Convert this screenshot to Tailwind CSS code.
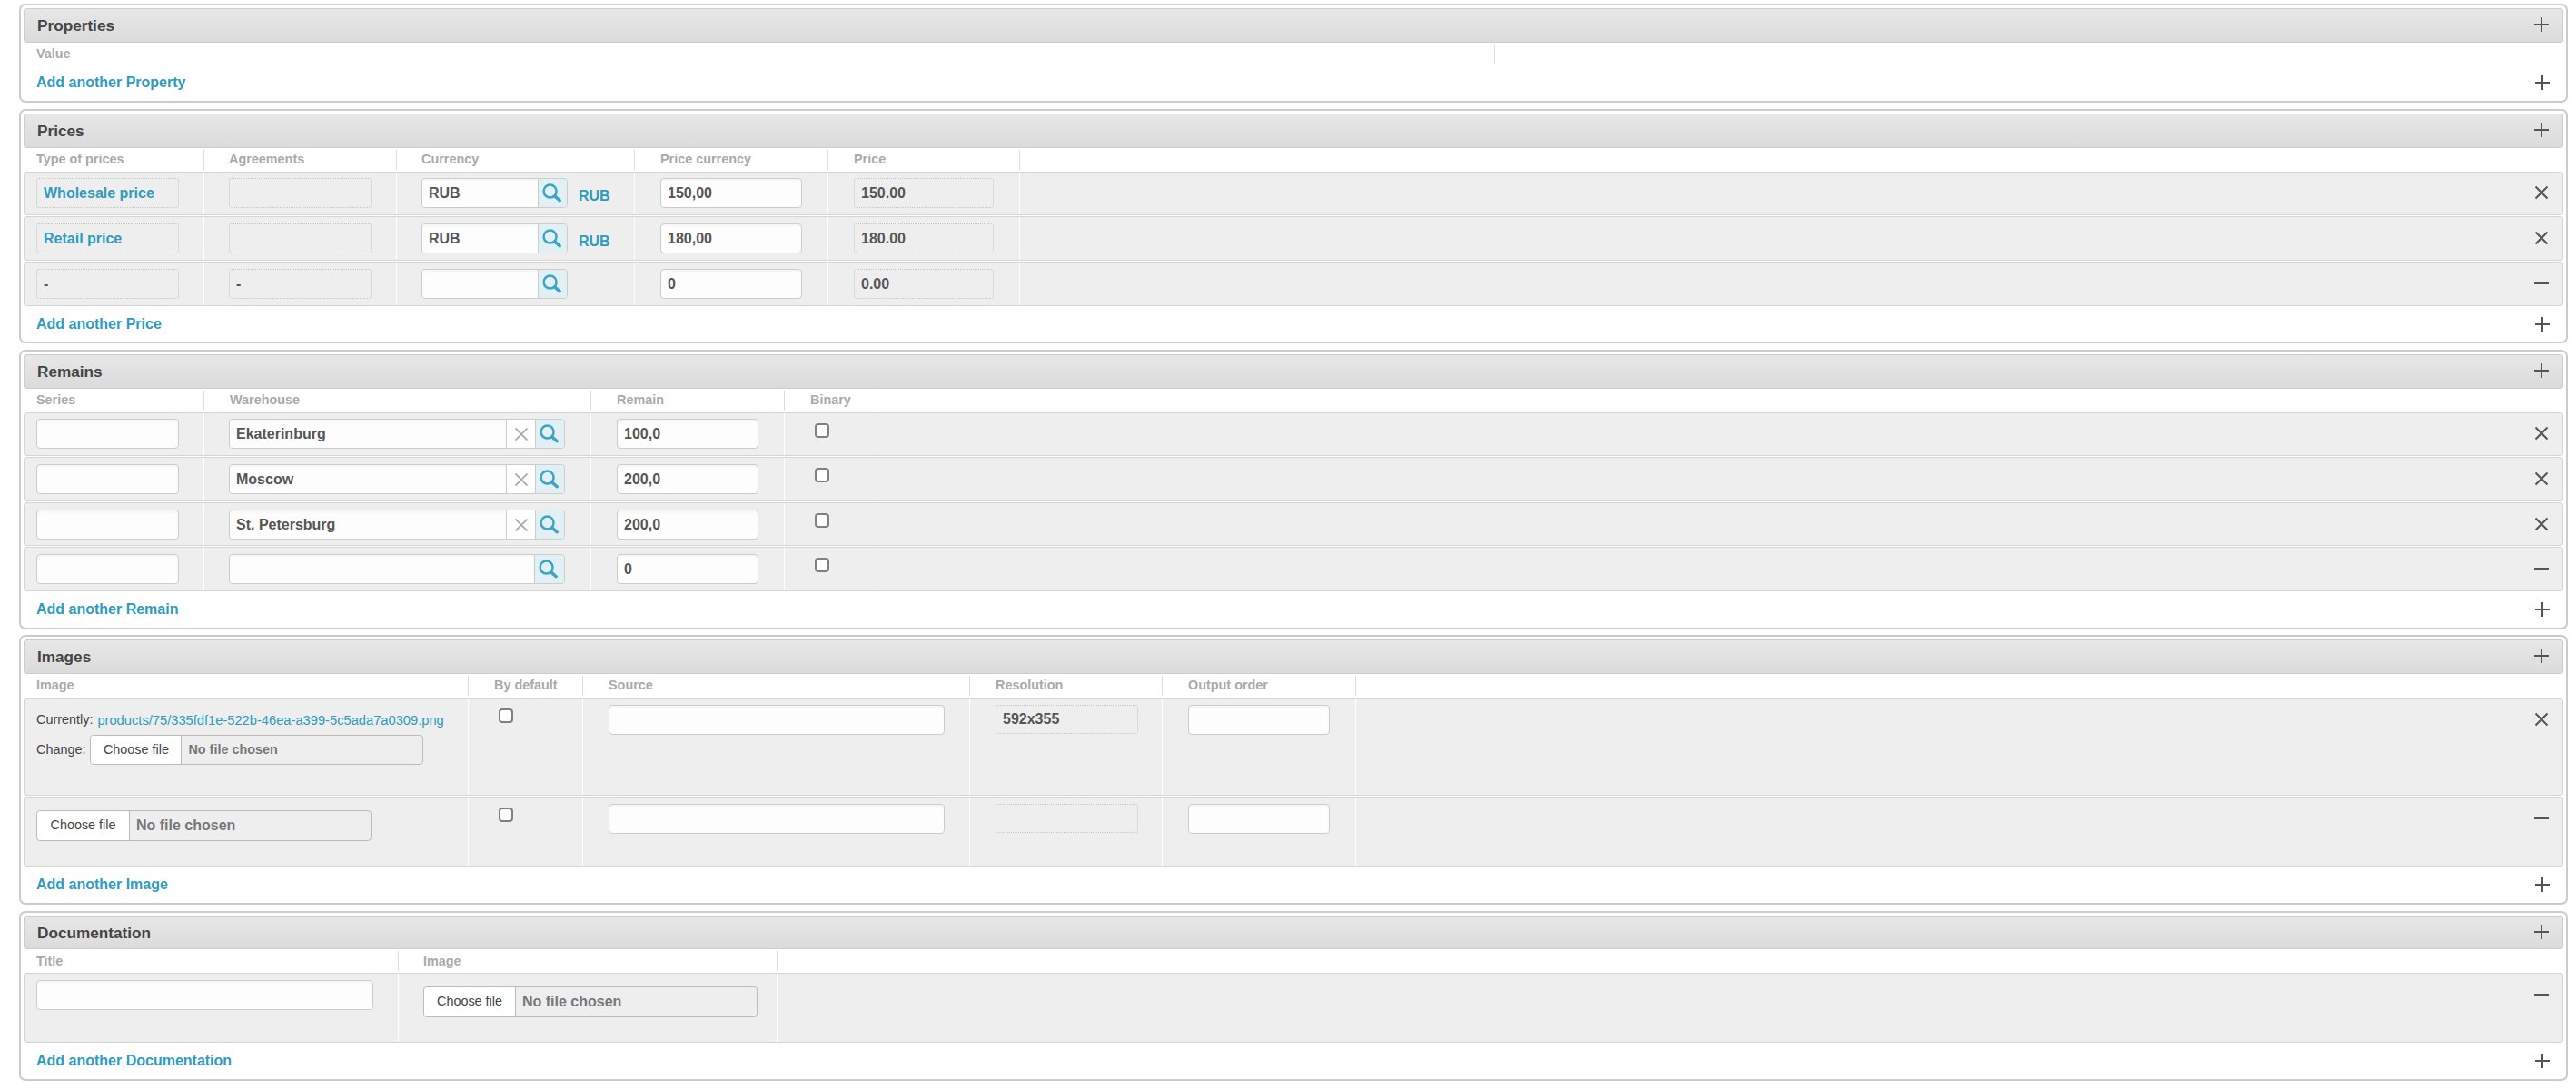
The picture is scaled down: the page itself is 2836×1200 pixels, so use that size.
<!DOCTYPE html>
<html lang="en">
<head>
  <meta charset="UTF-8" />
  <title>Product inlines</title>
  <script src="https://cdn.jsdelivr.net/npm/@tailwindcss/browser@4"></script>
</head>
<body class="bg-white font-['Liberation_Sans',Arial,sans-serif] pt-[4px] pl-[21px] pr-[9px]">

  <svg class="hidden">
    <symbol id="plus" viewBox="0 0 16 16"><path d="M0 8H16M8 0V16" stroke="#555" stroke-width="2" fill="none" /></symbol>
    <symbol id="minus" viewBox="0 0 16 16"><path d="M0 8H16" stroke="#555" stroke-width="2" fill="none" /></symbol>
    <symbol id="cross" viewBox="0 0 16 16"><path d="M1.5 1.5L14.5 14.5M14.5 1.5L1.5 14.5" stroke="#555" stroke-width="2" fill="none" /></symbol>
    <symbol id="clear" viewBox="0 0 14 14"><path d="M0.5 0.5L13.5 13.5M13.5 0.5L0.5 13.5" stroke="#aaa" stroke-width="1.8" fill="none" /></symbol>
    <symbol id="search" viewBox="0 0 32 32"><circle cx="13" cy="14" r="7.2" stroke="#3fa3c4" stroke-width="2.6" fill="none" /><path d="M18.5 19.8L24 24.5" stroke="#3fa3c4" stroke-width="3.6" stroke-linecap="round" fill="none" /></symbol>
  </svg>

  <!-- Properties -->
  <section class="border-2 border-[#ccc] rounded-[7px] px-[3px] pt-[3px] h-[109px] mb-[7px]">
    <div class="h-[38px] flex items-center justify-between pl-[14px] pr-[15px] rounded-[3px] border border-[#ccc] bg-gradient-to-b from-[#e7e7e7] to-[#dbdbdb]">
      <h2 class="mt-[2px] text-[17.2px] font-bold text-[#444]">Properties</h2>
      <svg class="w-4 h-4 mb-[2px]"><use href="#plus" /></svg>
    </div>
    <div class="flex h-[26px] text-[14.4px] font-bold text-[#aaa]">
      <div class="w-[1620px] my-[2px] pl-[14px] flex items-center border-r border-[#ddd]">Value</div>
    </div>
    <div class="h-[36px] flex items-center justify-between pl-[14px] pr-[15px]">
      <a class="text-[16px] font-bold text-[#2f9bbf]">Add another Property</a>
      <svg class="w-4 h-4"><use href="#plus" /></svg>
    </div>
  </section>

  <!-- Prices -->
  <section class="border-2 border-[#ccc] rounded-[7px] px-[3px] pt-[3px] h-[258px] mb-[7px]">
    <div class="h-[38px] flex items-center justify-between pl-[14px] pr-[15px] rounded-[3px] border border-[#ccc] bg-gradient-to-b from-[#e7e7e7] to-[#dbdbdb]">
      <h2 class="mt-[2px] text-[17.2px] font-bold text-[#444]">Prices</h2>
      <svg class="w-4 h-4 mb-[2px]"><use href="#plus" /></svg>
    </div>
    <div class="flex h-[26px] text-[14.4px] font-bold text-[#aaa]">
      <div class="w-[199px] my-[2px] pl-[14px] flex items-center border-r border-[#ddd]">Type of prices</div>
      <div class="w-[212px] my-[2px] pl-[27px] flex items-center border-r border-[#ddd]">Agreements</div>
      <div class="w-[262px] my-[2px] pl-[27px] flex items-center border-r border-[#ddd]">Currency</div>
      <div class="w-[213px] my-[2px] pl-[28px] flex items-center border-r border-[#ddd]">Price currency</div>
      <div class="w-[211px] my-[2px] pl-[28px] flex items-center border-r border-[#ddd]">Price</div>
    </div>

    <div class="flex h-[48px] mb-px border border-[#d4d4d4] rounded-[3px] bg-[#eee] text-[16px] font-bold text-[#555]">
      <div class="w-[198px] pl-[13px] pt-[6px] border-r border-white">
        <div class="w-[157px] h-[33px] pl-[7px] flex items-center border border-dotted border-[#c4c4c4] rounded-[3px] text-[#2f9bbf]">Wholesale price</div>
      </div>
      <div class="w-[212px] pl-[27px] pt-[6px] border-r border-white">
        <div class="w-[157px] h-[33px] border border-dotted border-[#c4c4c4] rounded-[3px]"></div>
      </div>
      <div class="w-[262px] pl-[27px] pt-[6px] border-r border-white flex items-start">
        <div class="flex w-[161px] h-[33px] border border-[#ccc] rounded-[4px] overflow-hidden">
          <input value="RUB" class="flex-1 min-w-0 pl-[7px] bg-[#fdfdfd] font-bold shadow-[inset_0_2px_3px_rgba(0,0,0,0.03)]" />
          <span class="w-[32px] bg-[#e1f0f5] border-l border-[#ccc]"><svg class="w-[31px] h-[31px]"><use href="#search" /></svg></span>
        </div>
        <a class="ml-[12px] mt-[8px] text-[#2f9bbf]">RUB</a>
      </div>
      <div class="w-[213px] pl-[28px] pt-[6px] border-r border-white">
        <input value="150,00" class="w-[156px] h-[33px] pl-[7px] bg-[#fdfdfd] font-bold border border-[#ccc] rounded-[4px] shadow-[inset_0_2px_3px_rgba(0,0,0,0.03)]" />
      </div>
      <div class="w-[211px] pl-[28px] pt-[6px] border-r border-white">
        <div class="w-[154px] h-[33px] pl-[7px] flex items-center border border-dotted border-[#c4c4c4] rounded-[3px]">150.00</div>
      </div>
      <div class="flex-1 flex items-start justify-end pt-[14px] pr-[15px]"><svg class="w-4 h-4"><use href="#cross" /></svg></div>
    </div>

    <div class="flex h-[49px] mb-px border border-[#d4d4d4] rounded-[3px] bg-[#eee] text-[16px] font-bold text-[#555]">
      <div class="w-[198px] pl-[13px] pt-[7px] border-r border-white">
        <div class="w-[157px] h-[33px] pl-[7px] flex items-center border border-dotted border-[#c4c4c4] rounded-[3px] text-[#2f9bbf]">Retail price</div>
      </div>
      <div class="w-[212px] pl-[27px] pt-[7px] border-r border-white">
        <div class="w-[157px] h-[33px] border border-dotted border-[#c4c4c4] rounded-[3px]"></div>
      </div>
      <div class="w-[262px] pl-[27px] pt-[7px] border-r border-white flex items-start">
        <div class="flex w-[161px] h-[33px] border border-[#ccc] rounded-[4px] overflow-hidden">
          <input value="RUB" class="flex-1 min-w-0 pl-[7px] bg-[#fdfdfd] font-bold shadow-[inset_0_2px_3px_rgba(0,0,0,0.03)]" />
          <span class="w-[32px] bg-[#e1f0f5] border-l border-[#ccc]"><svg class="w-[31px] h-[31px]"><use href="#search" /></svg></span>
        </div>
        <a class="ml-[12px] mt-[8px] text-[#2f9bbf]">RUB</a>
      </div>
      <div class="w-[213px] pl-[28px] pt-[7px] border-r border-white">
        <input value="180,00" class="w-[156px] h-[33px] pl-[7px] bg-[#fdfdfd] font-bold border border-[#ccc] rounded-[4px] shadow-[inset_0_2px_3px_rgba(0,0,0,0.03)]" />
      </div>
      <div class="w-[211px] pl-[28px] pt-[7px] border-r border-white">
        <div class="w-[154px] h-[33px] pl-[7px] flex items-center border border-dotted border-[#c4c4c4] rounded-[3px]">180.00</div>
      </div>
      <div class="flex-1 flex items-start justify-end pt-[15px] pr-[15px]"><svg class="w-4 h-4"><use href="#cross" /></svg></div>
    </div>

    <div class="flex h-[49px] border border-[#d4d4d4] rounded-[3px] bg-[#eee] text-[16px] font-bold text-[#555]">
      <div class="w-[198px] pl-[13px] pt-[7px] border-r border-white">
        <div class="w-[157px] h-[33px] pl-[7px] flex items-center border border-dotted border-[#c4c4c4] rounded-[3px]">-</div>
      </div>
      <div class="w-[212px] pl-[27px] pt-[7px] border-r border-white">
        <div class="w-[157px] h-[33px] pl-[7px] flex items-center border border-dotted border-[#c4c4c4] rounded-[3px]">-</div>
      </div>
      <div class="w-[262px] pl-[27px] pt-[7px] border-r border-white flex items-start">
        <div class="flex w-[161px] h-[33px] border border-[#ccc] rounded-[4px] overflow-hidden">
          <input value="" class="flex-1 min-w-0 pl-[7px] bg-[#fdfdfd] font-bold shadow-[inset_0_2px_3px_rgba(0,0,0,0.03)]" />
          <span class="w-[32px] bg-[#e1f0f5] border-l border-[#ccc]"><svg class="w-[31px] h-[31px]"><use href="#search" /></svg></span>
        </div>
      </div>
      <div class="w-[213px] pl-[28px] pt-[7px] border-r border-white">
        <input value="0" class="w-[156px] h-[33px] pl-[7px] bg-[#fdfdfd] font-bold border border-[#ccc] rounded-[4px] shadow-[inset_0_2px_3px_rgba(0,0,0,0.03)]" />
      </div>
      <div class="w-[211px] pl-[28px] pt-[7px] border-r border-white">
        <div class="w-[154px] h-[33px] pl-[7px] flex items-center border border-dotted border-[#c4c4c4] rounded-[3px]">0.00</div>
      </div>
      <div class="flex-1 flex items-start justify-end pt-[15px] pr-[15px]"><svg class="w-4 h-4"><use href="#minus" /></svg></div>
    </div>

    <div class="h-[40px] flex items-center justify-between pl-[14px] pr-[15px]">
      <a class="text-[16px] font-bold text-[#2f9bbf]">Add another Price</a>
      <svg class="w-4 h-4"><use href="#plus" /></svg>
    </div>
  </section>

  <!-- Remains -->
  <section class="border-2 border-[#ccc] rounded-[7px] px-[3px] pt-[3px] h-[308px] mb-[6px]">
    <div class="h-[38px] flex items-center justify-between pl-[14px] pr-[15px] rounded-[3px] border border-[#ccc] bg-gradient-to-b from-[#e7e7e7] to-[#dbdbdb]">
      <h2 class="mt-[2px] text-[17.2px] font-bold text-[#444]">Remains</h2>
      <svg class="w-4 h-4 mb-[2px]"><use href="#plus" /></svg>
    </div>
    <div class="flex h-[26px] text-[14.4px] font-bold text-[#aaa]">
      <div class="w-[199px] my-[2px] pl-[14px] flex items-center border-r border-[#ddd]">Series</div>
      <div class="w-[426px] my-[2px] pl-[28px] flex items-center border-r border-[#ddd]">Warehouse</div>
      <div class="w-[213px] my-[2px] pl-[28px] flex items-center border-r border-[#ddd]">Remain</div>
      <div class="w-[102px] my-[2px] pl-[28px] flex items-center border-r border-[#ddd]">Binary</div>
    </div>

    <div class="flex h-[48px] mb-px border border-[#d4d4d4] rounded-[3px] bg-[#eee] text-[16px] font-bold text-[#555]">
      <div class="w-[198px] pl-[13px] pt-[6px] border-r border-white">
        <input class="w-[157px] h-[33px] bg-[#fdfdfd] border border-[#ccc] rounded-[4px] shadow-[inset_0_2px_3px_rgba(0,0,0,0.03)]" />
      </div>
      <div class="w-[426px] pl-[27px] pt-[6px] border-r border-white">
        <div class="flex w-[370px] h-[33px] border border-[#ccc] rounded-[4px] overflow-hidden">
          <input value="Ekaterinburg" class="flex-1 min-w-0 pl-[7px] bg-[#fdfdfd] font-bold shadow-[inset_0_2px_3px_rgba(0,0,0,0.03)]" />
          <span class="w-[33px] flex items-center justify-center bg-white border-l border-r border-[#ccc]"><svg class="w-[14px] h-[14px]"><use href="#clear" /></svg></span>
          <span class="w-[31px] bg-[#e1f0f5]"><svg class="w-[31px] h-[31px]"><use href="#search" /></svg></span>
        </div>
      </div>
      <div class="w-[213px] pl-[28px] pt-[6px] border-r border-white">
        <input value="100,0" class="w-[156px] h-[33px] pl-[7px] bg-[#fdfdfd] font-bold border border-[#ccc] rounded-[4px] shadow-[inset_0_2px_3px_rgba(0,0,0,0.03)]" />
      </div>
      <div class="w-[102px] pl-[33px] pt-[11px] border-r border-white">
        <span class="block w-4 h-4 border-2 border-[#808080] bg-white rounded-[4px]"></span>
      </div>
      <div class="flex-1 flex items-start justify-end pt-[14px] pr-[15px]"><svg class="w-4 h-4"><use href="#cross" /></svg></div>
    </div>

    <div class="flex h-[49px] mb-px border border-[#d4d4d4] rounded-[3px] bg-[#eee] text-[16px] font-bold text-[#555]">
      <div class="w-[198px] pl-[13px] pt-[7px] border-r border-white">
        <input class="w-[157px] h-[33px] bg-[#fdfdfd] border border-[#ccc] rounded-[4px] shadow-[inset_0_2px_3px_rgba(0,0,0,0.03)]" />
      </div>
      <div class="w-[426px] pl-[27px] pt-[7px] border-r border-white">
        <div class="flex w-[370px] h-[33px] border border-[#ccc] rounded-[4px] overflow-hidden">
          <input value="Moscow" class="flex-1 min-w-0 pl-[7px] bg-[#fdfdfd] font-bold shadow-[inset_0_2px_3px_rgba(0,0,0,0.03)]" />
          <span class="w-[33px] flex items-center justify-center bg-white border-l border-r border-[#ccc]"><svg class="w-[14px] h-[14px]"><use href="#clear" /></svg></span>
          <span class="w-[31px] bg-[#e1f0f5]"><svg class="w-[31px] h-[31px]"><use href="#search" /></svg></span>
        </div>
      </div>
      <div class="w-[213px] pl-[28px] pt-[7px] border-r border-white">
        <input value="200,0" class="w-[156px] h-[33px] pl-[7px] bg-[#fdfdfd] font-bold border border-[#ccc] rounded-[4px] shadow-[inset_0_2px_3px_rgba(0,0,0,0.03)]" />
      </div>
      <div class="w-[102px] pl-[33px] pt-[11px] border-r border-white">
        <span class="block w-4 h-4 border-2 border-[#808080] bg-white rounded-[4px]"></span>
      </div>
      <div class="flex-1 flex items-start justify-end pt-[15px] pr-[15px]"><svg class="w-4 h-4"><use href="#cross" /></svg></div>
    </div>

    <div class="flex h-[48px] mb-px border border-[#d4d4d4] rounded-[3px] bg-[#eee] text-[16px] font-bold text-[#555]">
      <div class="w-[198px] pl-[13px] pt-[7px] border-r border-white">
        <input class="w-[157px] h-[33px] bg-[#fdfdfd] border border-[#ccc] rounded-[4px] shadow-[inset_0_2px_3px_rgba(0,0,0,0.03)]" />
      </div>
      <div class="w-[426px] pl-[27px] pt-[7px] border-r border-white">
        <div class="flex w-[370px] h-[33px] border border-[#ccc] rounded-[4px] overflow-hidden">
          <input value="St. Petersburg" class="flex-1 min-w-0 pl-[7px] bg-[#fdfdfd] font-bold shadow-[inset_0_2px_3px_rgba(0,0,0,0.03)]" />
          <span class="w-[33px] flex items-center justify-center bg-white border-l border-r border-[#ccc]"><svg class="w-[14px] h-[14px]"><use href="#clear" /></svg></span>
          <span class="w-[31px] bg-[#e1f0f5]"><svg class="w-[31px] h-[31px]"><use href="#search" /></svg></span>
        </div>
      </div>
      <div class="w-[213px] pl-[28px] pt-[7px] border-r border-white">
        <input value="200,0" class="w-[156px] h-[33px] pl-[7px] bg-[#fdfdfd] font-bold border border-[#ccc] rounded-[4px] shadow-[inset_0_2px_3px_rgba(0,0,0,0.03)]" />
      </div>
      <div class="w-[102px] pl-[33px] pt-[11px] border-r border-white">
        <span class="block w-4 h-4 border-2 border-[#808080] bg-white rounded-[4px]"></span>
      </div>
      <div class="flex-1 flex items-start justify-end pt-[15px] pr-[15px]"><svg class="w-4 h-4"><use href="#cross" /></svg></div>
    </div>

    <div class="flex h-[49px] border border-[#d4d4d4] rounded-[3px] bg-[#eee] text-[16px] font-bold text-[#555]">
      <div class="w-[198px] pl-[13px] pt-[7px] border-r border-white">
        <input class="w-[157px] h-[33px] bg-[#fdfdfd] border border-[#ccc] rounded-[4px] shadow-[inset_0_2px_3px_rgba(0,0,0,0.03)]" />
      </div>
      <div class="w-[426px] pl-[27px] pt-[7px] border-r border-white">
        <div class="flex w-[370px] h-[33px] border border-[#ccc] rounded-[4px] overflow-hidden">
          <input value="" class="flex-1 min-w-0 pl-[7px] bg-[#fdfdfd] font-bold shadow-[inset_0_2px_3px_rgba(0,0,0,0.03)]" />
          <span class="w-[33px] bg-[#e1f0f5] border-l border-[#ccc]"><svg class="w-[31px] h-[31px]"><use href="#search" /></svg></span>
        </div>
      </div>
      <div class="w-[213px] pl-[28px] pt-[7px] border-r border-white">
        <input value="0" class="w-[156px] h-[33px] pl-[7px] bg-[#fdfdfd] font-bold border border-[#ccc] rounded-[4px] shadow-[inset_0_2px_3px_rgba(0,0,0,0.03)]" />
      </div>
      <div class="w-[102px] pl-[33px] pt-[11px] border-r border-white">
        <span class="block w-4 h-4 border-2 border-[#808080] bg-white rounded-[4px]"></span>
      </div>
      <div class="flex-1 flex items-start justify-end pt-[15px] pr-[15px]"><svg class="w-4 h-4"><use href="#minus" /></svg></div>
    </div>

    <div class="h-[40px] flex items-center justify-between pl-[14px] pr-[15px]">
      <a class="text-[16px] font-bold text-[#2f9bbf]">Add another Remain</a>
      <svg class="w-4 h-4"><use href="#plus" /></svg>
    </div>
  </section>

  <!-- Images -->
  <section class="border-2 border-[#ccc] rounded-[7px] px-[3px] pt-[3px] h-[297px] mb-[7px]">
    <div class="h-[38px] flex items-center justify-between pl-[14px] pr-[15px] rounded-[3px] border border-[#ccc] bg-gradient-to-b from-[#e7e7e7] to-[#dbdbdb]">
      <h2 class="mt-[2px] text-[17.2px] font-bold text-[#444]">Images</h2>
      <svg class="w-4 h-4 mb-[2px]"><use href="#plus" /></svg>
    </div>
    <div class="flex h-[26px] text-[14.4px] font-bold text-[#aaa]">
      <div class="w-[490px] my-[2px] pl-[14px] flex items-center border-r border-[#ddd]">Image</div>
      <div class="w-[126px] my-[2px] pl-[28px] flex items-center border-r border-[#ddd]">By default</div>
      <div class="w-[426px] my-[2px] pl-[28px] flex items-center border-r border-[#ddd]">Source</div>
      <div class="w-[212px] my-[2px] pl-[28px] flex items-center border-r border-[#ddd]">Resolution</div>
      <div class="w-[213px] my-[2px] pl-[28px] flex items-center border-r border-[#ddd]">Output order</div>
    </div>

    <div class="flex h-[108px] mb-px border border-[#d4d4d4] rounded-[3px] bg-[#eee] text-[16px] font-bold text-[#555]">
      <div class="w-[489px] pl-[13px] pt-[14px] border-r border-white text-[14.4px] font-normal text-[#444]">
        <p class="h-[20px] flex items-center gap-[5px]">Currently: <a class="text-[14.7px] text-[#2f9bbf]">products/75/335fdf1e-522b-46ea-a399-5c5ada7a0309.png</a></p>
        <div class="flex items-start mt-[6px]">
          <span class="mt-[6px] mr-[5px]">Change:</span>
          <div class="flex w-[367px] h-[33px] border border-[#bbb] rounded-[4px] overflow-hidden">
            <button class="w-[100px] bg-white border-r border-[#bbb]">Choose file</button>
            <span class="pl-[7px] self-center font-bold text-[#777]">No file chosen</span>
          </div>
        </div>
      </div>
      <div class="w-[126px] pl-[33px] pt-[11px] border-r border-white">
        <span class="block w-4 h-4 border-2 border-[#808080] bg-white rounded-[4px]"></span>
      </div>
      <div class="w-[426px] pl-[28px] pt-[7px] border-r border-white">
        <input class="w-[370px] h-[33px] bg-[#fdfdfd] border border-[#ccc] rounded-[4px] shadow-[inset_0_2px_3px_rgba(0,0,0,0.03)]" />
      </div>
      <div class="w-[212px] pl-[28px] pt-[7px] border-r border-white">
        <div class="w-[157px] h-[32px] pl-[7px] flex items-center border border-dotted border-[#c4c4c4] rounded-[3px]">592x355</div>
      </div>
      <div class="w-[213px] pl-[28px] pt-[7px] border-r border-white">
        <input class="w-[156px] h-[33px] bg-[#fdfdfd] border border-[#ccc] rounded-[4px] shadow-[inset_0_2px_3px_rgba(0,0,0,0.03)]" />
      </div>
      <div class="flex-1 flex items-start justify-end pt-[15px] pr-[15px]"><svg class="w-4 h-4"><use href="#cross" /></svg></div>
    </div>

    <div class="flex h-[77px] border border-[#d4d4d4] rounded-[3px] bg-[#eee] text-[16px] font-bold text-[#555]">
      <div class="w-[489px] pl-[13px] pt-[14px] border-r border-white">
        <div class="flex items-center w-[369px] h-[34px] border border-[#bbb] rounded-[4px]">
          <button class="w-[102px] h-[32px] bg-white border-r border-[#bbb] text-[14.4px] font-normal text-[#444] rounded-l-[4px]">Choose file</button>
          <span class="pl-[7px] text-[#777]">No file chosen</span>
        </div>
      </div>
      <div class="w-[126px] pl-[33px] pt-[11px] border-r border-white">
        <span class="block w-4 h-4 border-2 border-[#808080] bg-white rounded-[4px]"></span>
      </div>
      <div class="w-[426px] pl-[28px] pt-[7px] border-r border-white">
        <input class="w-[370px] h-[33px] bg-[#fdfdfd] border border-[#ccc] rounded-[4px] shadow-[inset_0_2px_3px_rgba(0,0,0,0.03)]" />
      </div>
      <div class="w-[212px] pl-[28px] pt-[7px] border-r border-white">
        <div class="w-[157px] h-[32px] border border-dotted border-[#c4c4c4] rounded-[3px]"></div>
      </div>
      <div class="w-[213px] pl-[28px] pt-[7px] border-r border-white">
        <input class="w-[156px] h-[33px] bg-[#fdfdfd] border border-[#ccc] rounded-[4px] shadow-[inset_0_2px_3px_rgba(0,0,0,0.03)]" />
      </div>
      <div class="flex-1 flex items-start justify-end pt-[15px] pr-[15px]"><svg class="w-4 h-4"><use href="#minus" /></svg></div>
    </div>

    <div class="h-[39px] flex items-center justify-between pl-[14px] pr-[15px]">
      <a class="text-[16px] font-bold text-[#2f9bbf]">Add another Image</a>
      <svg class="w-4 h-4"><use href="#plus" /></svg>
    </div>
  </section>

  <!-- Documentation -->
  <section class="border-2 border-[#ccc] rounded-[7px] px-[3px] pt-[3px] h-[187px]">
    <div class="h-[37px] flex items-center justify-between pl-[14px] pr-[15px] rounded-[3px] border border-[#ccc] bg-gradient-to-b from-[#e7e7e7] to-[#dbdbdb]">
      <h2 class="mt-[2px] text-[17.2px] font-bold text-[#444]">Documentation</h2>
      <svg class="w-4 h-4 mb-[2px]"><use href="#plus" /></svg>
    </div>
    <div class="flex h-[26px] text-[14.4px] font-bold text-[#aaa]">
      <div class="w-[413px] my-[2px] pl-[14px] pt-[2px] flex items-center border-r border-[#ddd]">Title</div>
      <div class="w-[417px] my-[2px] pl-[27px] pt-[2px] flex items-center border-r border-[#ddd]">Image</div>
    </div>

    <div class="flex h-[77px] border border-[#d4d4d4] rounded-[3px] bg-[#eee] text-[16px] font-bold text-[#555]">
      <div class="w-[412px] pl-[13px] pt-[7px] border-r border-white">
        <input class="w-[371px] h-[33px] bg-[#fdfdfd] border border-[#ccc] rounded-[4px] shadow-[inset_0_2px_3px_rgba(0,0,0,0.03)]" />
      </div>
      <div class="w-[417px] pl-[27px] pt-[14px] border-r border-white">
        <div class="flex items-center w-[368px] h-[34px] border border-[#bbb] rounded-[4px]">
          <button class="w-[101px] h-[32px] bg-white border-r border-[#bbb] text-[14.4px] font-normal text-[#444] rounded-l-[4px]">Choose file</button>
          <span class="pl-[7px] text-[#777]">No file chosen</span>
        </div>
      </div>
      <div class="flex-1 flex items-start justify-end pt-[15px] pr-[15px]"><svg class="w-4 h-4"><use href="#minus" /></svg></div>
    </div>

    <div class="h-[40px] flex items-center justify-between pl-[14px] pr-[15px]">
      <a class="text-[16px] font-bold text-[#2f9bbf]">Add another Documentation</a>
      <svg class="w-4 h-4"><use href="#plus" /></svg>
    </div>
  </section>

</body>
</html>
